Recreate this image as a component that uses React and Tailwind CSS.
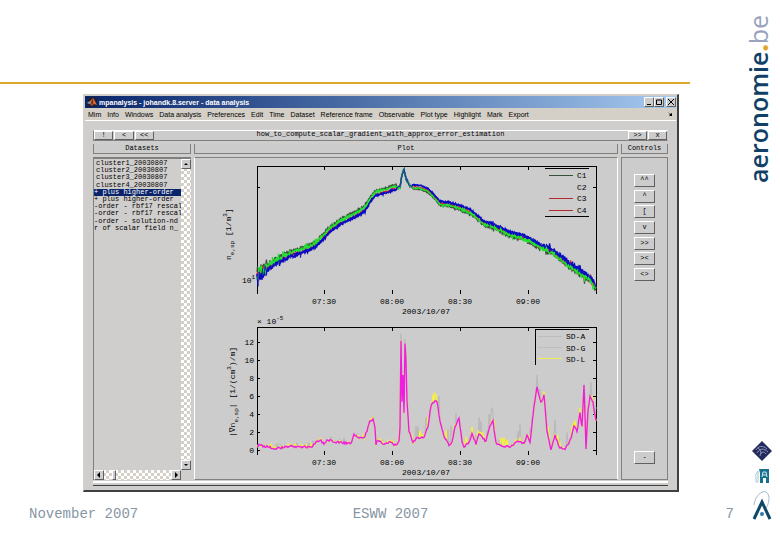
import React, { useState } from "react";

const MENU = [
  "Mim",
  "Info",
  "Windows",
  "Data analysis",
  "Preferences",
  "Edit",
  "Time",
  "Dataset",
  "Reference frame",
  "Observable",
  "Plot type",
  "Highlight",
  "Mark",
  "Export",
];

const DATASETS = [
  "cluster1_20030807",
  "cluster2_20030807",
  "cluster3_20030807",
  "cluster4_20030807",
  "+ plus higher-order",
  "+ plus higher-order",
  "-order - rbf17 rescal",
  "-order - rbf17 rescal",
  "-order - solution-nd",
  "r of scalar field n_",
];

const CONTROLS = ["^^", "^", "[", "v", ">>", "><", "<>"];

const TICKS = [
  { x: 67, label: "07:30" },
  { x: 135, label: "08:00" },
  { x: 203, label: "08:30" },
  { x: 271, label: "09:00" },
];

// Mean density curve, in axes units (339 x 128)
const DENSITY = [
  [0, 109], [5, 105], [13, 99], [23, 93], [33, 88], [43, 85], [53, 81],
  [60, 77], [66, 71], [73, 63], [83, 56], [93, 51], [103, 46], [109, 41],
  [114, 32], [119, 27], [127, 25], [135, 22], [143, 21], [145, 9], [147, 3],
  [149, 13], [153, 20], [163, 21], [171, 24], [177, 30], [183, 37],
  [193, 38], [203, 41], [213, 45], [219, 50], [227, 57], [235, 59],
  [243, 63], [253, 68], [263, 70], [273, 74], [283, 80], [293, 84],
  [303, 91], [313, 99], [323, 106], [333, 112], [339, 121],
];

const GRADIENT = [
  [0, 120], [2, 118], [5, 119], [13, 120], [18, 122], [28, 120], [35, 119],
  [43, 120], [55, 120], [59, 115], [63, 113], [67, 117], [71, 113],
  [78, 115], [88, 116], [94, 116], [97, 108], [101, 111], [107, 111],
  [110, 104], [113, 94], [116, 92], [118, 100], [119, 117], [121, 113],
  [127, 117], [134, 115], [139, 119], [142, 114], [143, 100], [144, 13],
  [145, 74], [146, 48], [147, 86], [148, 17], [149, 34], [150, 74],
  [152, 104], [156, 116], [160, 111], [167, 110], [171, 99], [174, 79],
  [176, 75], [180, 74], [183, 94], [187, 110], [192, 118], [195, 116],
  [198, 99], [202, 92], [205, 114], [207, 120], [212, 115], [215, 107],
  [219, 117], [222, 106], [229, 115], [233, 98], [236, 94], [239, 116],
  [245, 119], [253, 120], [261, 114], [267, 117], [270, 108], [273, 116],
  [277, 79], [280, 60], [284, 76], [287, 68], [290, 104], [294, 122],
  [298, 108], [302, 120], [308, 122], [314, 112], [317, 99], [320, 104],
  [323, 86], [325, 100], [327, 58], [329, 121], [331, 84], [333, 70],
  [336, 76], [339, 94],
];

const valueAt = (points, x) => {
  const i = Math.max(1, points.findIndex((p) => p[0] >= x));
  const [x0, y0] = points[i - 1];
  const [x1, y1] = points[i];
  return y0 + ((y1 - y0) * (x - x0)) / (x1 - x0);
};

// small seeded generator so every render draws the same traces
const makeRandom = (seed) => {
  let s = seed;
  return () => {
    s = (s * 16807) % 2147483647;
    return s / 2147483647;
  };
};

const densityPath = (seed, left, right) => {
  const rand = makeRandom(seed);
  let d = "";
  for (let x = 0; x <= 339; x += 0.5) {
    const edge = Math.abs(x - 160) / 160;
    const shift = x < 140 ? left : x > 155 ? right : 0;
    const spike = rand() > 0.95 ? 2.5 : 1;
    const amp = (1 + edge * 4) * spike + (x < 10 ? 7 : 0);
    const y = valueAt(DENSITY, x) + shift + (rand() - 0.5) * amp;
    d += `${x === 0 ? "M" : "L"}${x} ${y.toFixed(1)}`;
  }
  return d;
};

const gradientPath = (seed, amp, lift) => {
  const rand = makeRandom(seed);
  let d = "";
  for (let x = 0; x <= 339; x += 1) {
    const late = x > 140 ? 1 : 0.3;
    const up = rand() > 0.7 ? rand() * lift * late : 0;
    const y = valueAt(GRADIENT, x) + (rand() - 0.5) * amp - up;
    d += `${x === 0 ? "M" : "L"}${x} ${y.toFixed(1)}`;
  }
  return d;
};

const densityLines = [
  { color: "#35503a", width: 1.2, d: densityPath(11, -2.5, 2.5) },
  { color: "#d81c24", width: 1.2, d: densityPath(57, 1.5, 0.5) },
  { color: "#0a0ac4", width: 1.5, d: densityPath(313, 2.5, -1.5) },
  { color: "#22e02e", width: 1.3, d: densityPath(91, -1, 1.5) },
  { color: "#0a0ac4", width: 0.8, d: densityPath(717, 2.5, -1.5) },
];

const gradientLines = [
  { color: "#b9b9b9", width: 1, d: gradientPath(29, 1, 18) },
  { color: "#f7f03c", width: 1.3, d: gradientPath(83, 1, 9) },
  { color: "#f01ce0", width: 1.4, d: gradientPath(131, 2, 0) },
];

const Traces = ({ lines }) => (
  <g fill="none">
    {lines.map((l, index) => (
      <path key={index} d={l.d} stroke={l.color} strokeWidth={l.width} />
    ))}
  </g>
);

const Axes = ({ yTicks }) => (
  <g stroke="#000" fill="none" shapeRendering="crispEdges">
    <path d="M.5 128V.5H339.5V128" />
    {TICKS.map((t) => (
      <path key={t.x} d={`M${t.x + 0.5} 0v4M${t.x + 0.5} 124v4`} />
    ))}
    {yTicks.map((y) => (
      <path key={y} d={`M0 ${y + 0.5}h3M336 ${y + 0.5}h4`} />
    ))}
  </g>
);

const TimeLabels = () => (
  <g textAnchor="middle">
    {TICKS.map((t) => (
      <text key={t.x} x={t.x} y="138">
        {t.label}
      </text>
    ))}
    <text x="169" y="148">
      2003/10/07
    </text>
  </g>
);

const Plots = () => (
  <svg
    viewBox="0 0 422 321"
    className="block w-full h-auto font-['Liberation_Mono',monospace] text-[8px]"
  >
    {/* Density */}
    <g transform="translate(62 8)">
      <Axes yTicks={[21]} />
      <Traces lines={densityLines} />
      <TimeLabels />
      <text x="-15" y="117">
        10
        <tspan dy="-4" fontSize="6">
          1
        </tspan>
      </text>
      <text transform="translate(-26 94) rotate(-90)">
        n
        <tspan dy="3" fontSize="6">
          e,sp
        </tspan>
        <tspan dy="-3"> [1/m</tspan>
        <tspan dy="-4" fontSize="6">
          3
        </tspan>
        <tspan dy="4">]</tspan>
      </text>
      <path
        d="M288 2.5H332M288 50.5H332"
        stroke="#000"
        shapeRendering="crispEdges"
      />
      <g shapeRendering="crispEdges">
        <path d="M292 9.5h24" stroke="#35503a" />
        <path d="M292 32.5h24M292 44.5h24" stroke="#b02c2c" />
      </g>
      <text x="320" y="12">C1</text>
      <text x="320" y="24">C2</text>
      <text x="320" y="35">C3</text>
      <text x="320" y="47">C4</text>
    </g>

    {/* Gradient */}
    <g transform="translate(62 169)">
      <Axes yTicks={[15, 33, 51, 69, 87, 105, 123]} />
      <Traces lines={gradientLines} />
      <TimeLabels />
      <text x="0" y="-3">
        × 10
        <tspan dy="-4" fontSize="6">
          -5
        </tspan>
      </text>
      <g textAnchor="end">
        {[12, 10, 8, 6, 4, 2, 0].map((n, i) => (
          <text key={n} x="-3" y={18 + i * 18}>
            {n}
          </text>
        ))}
      </g>
      <text transform="translate(-22 110) rotate(-90)">
        |∇n
        <tspan dy="3" fontSize="6">
          e,sp
        </tspan>
        <tspan dy="-3">| [1/(cm</tspan>
        <tspan dy="-4" fontSize="6">
          3
        </tspan>
        <tspan dy="4">)/m]</tspan>
      </text>
      <path
        d="M278.5 38V2.5H332"
        fill="none"
        stroke="#000"
        shapeRendering="crispEdges"
      />
      <g shapeRendering="crispEdges">
        <path d="M281 9.5h24M281 20.5h24" stroke="#bdbdbd" />
        <path d="M281 31.5h24" stroke="#f0ee50" />
      </g>
      <text x="309" y="12">SD-A</text>
      <text x="309" y="24">SD-G</text>
      <text x="309" y="35">SD-L</text>
    </g>
  </svg>
);

const RaisedButton = ({ className, children, ...props }) => (
  <button
    className={`flex items-center justify-center overflow-hidden border border-t-white border-l-white border-r-[#606060] border-b-[#606060] bg-[#cccccc] text-black ${className}`}
    {...props}
  >
    {children}
  </button>
);

const Arrow = ({ d }) => (
  <svg viewBox="0 0 6 6" className="size-[6px] shrink-0">
    <path d={d} fill="#000" />
  </svg>
);

const DatasetList = () => {
  const [selected, setSelected] = useState(4);

  return (
    <div className="flex flex-col border-t-2 border-l border-[#808080]">
      <div className="flex flex-1">
        <ul className="grid h-[73px] min-w-0 flex-1 grid-rows-10 pt-px">
          {DATASETS.map((name, index) => (
            <li key={index} className="flex min-w-0">
              <button
                onClick={() => setSelected(index)}
                className={`w-full overflow-hidden whitespace-pre text-left leading-[7px] ${
                  index < 4 ? "pl-[2px]" : ""
                } ${selected === index ? "bg-[#0a246a] text-white" : ""}`}
              >
                {name}
              </button>
            </li>
          ))}
        </ul>
        <div className="flex w-[10px] flex-col bg-[repeating-conic-gradient(#ffffff_0_25%,#d4d0c8_0_50%)] bg-size-[6px_6px]">
          <RaisedButton className="h-[10px]" aria-label="Scroll up">
            <Arrow d="M3 2L5 4H1z" />
          </RaisedButton>
          <RaisedButton className="mt-auto h-[10px]" aria-label="Scroll down">
            <Arrow d="M1 2H5L3 4z" />
          </RaisedButton>
        </div>
      </div>
      <div className="mr-[10px] flex h-[10px] bg-[repeating-conic-gradient(#ffffff_0_25%,#d4d0c8_0_50%)] bg-size-[6px_6px]">
        <RaisedButton className="w-[10px]" aria-label="Scroll left">
          <Arrow d="M4 0V6L1 3z" />
        </RaisedButton>
        <RaisedButton className="ml-[8px] w-[4px]" aria-label="Scroll thumb" />
        <RaisedButton className="ml-auto w-[10px]" aria-label="Scroll right">
          <Arrow d="M2 0V6L5 3z" />
        </RaisedButton>
      </div>
    </div>
  );
};

const AnalysisWindow = () => (
  <section className="mt-[10px] mr-[64px] ml-[83px] flex flex-col border border-[#d4d0c8] border-r-2 border-r-[#404040] border-b-2 border-b-[#404040] bg-[#cfcecc] p-px font-['Liberation_Sans',sans-serif] text-[7px] leading-[9px] text-black">
    {/* Title bar */}
    <div className="flex h-[12px] items-center bg-linear-to-r from-[#0a246a] to-[#a6caf0] pl-[2px]">
      <svg viewBox="0 0 10 10" className="size-[10px]">
        <rect width="10" height="10" fill="#17203c" />
        <path d="M0 6L3 4L6 1L8 4L10 8L7 7L5 9L3 7z" fill="#d8642c" />
        <path d="M0 6L3 4L4 6L3 7z" fill="#5c9cc0" />
        <path d="M6 1L6 6L5 9L4 6z" fill="#7c2418" />
      </svg>
      <h1 className="ml-[2px] whitespace-pre font-bold text-white">
        mpanalysis - johandk.8.server - data analysis
      </h1>
      <div className="ml-auto flex">
        <RaisedButton className="size-[10px]" aria-label="Minimize">
          <Arrow d="M1 5H5V6H1z" />
        </RaisedButton>
        <RaisedButton className="size-[10px]" aria-label="Maximize">
          <svg viewBox="0 0 6 6" className="size-[6px] shrink-0">
            <path d="M.5 1H5.5V5.5H.5z" fill="none" stroke="#000" />
          </svg>
        </RaisedButton>
        <RaisedButton className="ml-[2px] size-[10px]" aria-label="Close">
          <svg viewBox="0 0 6 6" className="size-[6px]">
            <path d="M0 0L6 6M6 0L0 6" stroke="#000" />
          </svg>
        </RaisedButton>
      </div>
    </div>

    {/* Menu */}
    <nav className="flex h-[13px] items-center gap-[6px] border-b border-white bg-[#d4d0c8] px-[3px]">
      {MENU.map((item) => (
        <button key={item} className="whitespace-nowrap">
          {item}
        </button>
      ))}
      <span className="ml-auto">
        <Arrow d="M1 1L3 3L5 2V5H2L3 4z" />
      </span>
    </nav>

    <div className="flex flex-col px-[8px] pt-[9px] pb-[3px] font-['Liberation_Mono',monospace]">
      {/* Toolbar */}
      <div className="flex h-[11px] items-stretch border border-t-white border-r-transparent border-b-[#808080] border-l-[#808080] bg-[#cccccc]">
        <div className="flex w-[60px] gap-px">
          <RaisedButton className="flex-1">!</RaisedButton>
          <RaisedButton className="flex-1">&lt;</RaisedButton>
          <RaisedButton className="flex-1">&lt;&lt;</RaisedButton>
        </div>
        <p className="min-w-0 flex-1 overflow-hidden text-center leading-[7px]">
          how_to_compute_scalar_gradient_with_approx_error_estimation
        </p>
        <div className="flex w-[60px] justify-end gap-px">
          <RaisedButton className="w-[19px]">&gt;&gt;</RaisedButton>
          <RaisedButton className="w-[19px]">x</RaisedButton>
        </div>
      </div>

      {/* Panels */}
      <div className="mt-[3px] grid grid-cols-[98px_minmax(0,1fr)_47px] gap-x-[3px] gap-y-[3px]">
        <h2 className="border-r border-b border-l border-[#808080] bg-[#cccccc] text-center">
          Datasets
        </h2>
        <h2 className="border-r border-b border-l border-[#808080] bg-[#cccccc] text-center">
          Plot
        </h2>
        <h2 className="border-r border-b border-l border-[#808080] bg-[#cccccc] text-center">
          Controls
        </h2>

        <DatasetList />

        <div className="border border-t-[#808080] border-r-white border-b-[#808080] border-l-white bg-[#cccccc]">
          <Plots />
        </div>

        <div className="flex flex-col items-center border border-[#808080] bg-[#cccccc] pt-[16px] pb-[15px]">
          <div className="flex h-[107px] flex-col justify-between">
            {CONTROLS.map((c) => (
              <RaisedButton key={c} className="h-[13px] w-[21px]">
                {c}
              </RaisedButton>
            ))}
          </div>
          <RaisedButton className="mt-auto h-[13px] w-[21px]">-</RaisedButton>
        </div>
      </div>

      {/* Status bar */}
      <div className="mt-px h-[5px] border-t-2 border-b border-t-white border-b-[#404040] bg-[#cccccc]" />
    </div>
  </section>
);

const App = () => {
  return (
    <div className="flex min-h-screen bg-white">
      <main className="flex min-w-0 flex-1 flex-col">
        <div className="mr-[53px] h-[84px] border-b-2 border-[#dca82c]" />
        <AnalysisWindow />
        <footer className="mt-3 grid grid-cols-[18fr_auto_17fr] pr-[9px] pl-[29px] font-['Liberation_Mono',monospace] text-sm text-[#8796a3]">
          <span>November 2007</span>
          <span>ESWW 2007</span>
          <span className="text-right">7</span>
        </footer>
      </main>

      <aside className="flex w-[37px] flex-col items-center pt-[15px] pb-[19px]">
        <p className="rotate-180 self-start whitespace-nowrap font-['Open_Sans',sans-serif] text-[25px] leading-[30px] font-semibold text-[#123f66] [writing-mode:vertical-rl]">
          aeronomie<span className="font-extrabold text-[#e0a528]">.</span>
          <span className="font-medium text-[#98a2bd]">be</span>
        </p>
        <div className="mt-auto flex flex-col items-center gap-[7px]">
          <svg viewBox="0 0 20 20" className="size-[20px]">
            <path d="M10 0L20 10L10 20L0 10z" fill="#232a5c" />
            <g fill="none" stroke="#a9aed0" strokeWidth=".8">
              <path d="M4 9C6 5 11 4 15 8M5 12C8 7 12 7 16 11M8 15C9 10 12 10 14 13M6 7C8 8 9 10 9 13" />
            </g>
          </svg>
          <svg viewBox="0 0 16 15" className="h-[15px] w-[16px]">
            <path d="M5 1H15V15H12V10H9V15H6V5z" fill="#16718c" />
            <path d="M8 9L9 4H12L13 9M9 7H12" stroke="#d5e9ee" fill="none" />
            <path d="M1 8L4 3V14H2V8" stroke="#a5c8d4" fill="none" />
          </svg>
          <svg viewBox="0 0 20 31" className="h-[31px] w-[20px]">
            <path
              d="M2 15C3 6 10 0 14 2C18 4 18 12 14 18"
              fill="none"
              stroke="#8ba9bc"
              strokeWidth=".8"
            />
            <path
              d="M2 29L10 12L18 29"
              fill="none"
              stroke="#0e4868"
              strokeWidth="3"
            />
            <circle cx="10" cy="24" r="2" fill="#2c78a4" />
          </svg>
        </div>
      </aside>
    </div>
  );
};

export default App;
